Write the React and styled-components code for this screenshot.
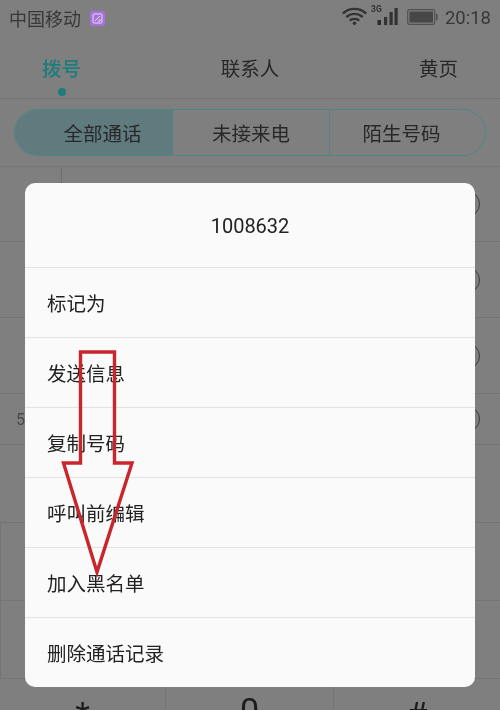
import React from "react";
import styled, { createGlobalStyle } from "styled-components";

const Global = createGlobalStyle`
  html, body { margin: 0; padding: 0; background: #7f7f7f; }
  body { font-family: "Noto Sans CJK SC", "Noto Sans", sans-serif; }
`;

const Page = styled.div`
  position: relative;
  width: 500px;
  height: 710px;
  overflow: hidden;
  background: #7f7f7f;
  color: #333;
  display: flex;
  flex-direction: column;
  filter: blur(0.3px);
`;

const StatusBar = styled.div`
  height: 36px;
  flex: none;
  display: flex;
  align-items: center;
  padding: 0 9px;
  font-size: 18px;
  color: #383838;
`;

const Carrier = styled.span`
  line-height: 34px;
`;

const SimBadge = styled.span`
  width: 15px;
  height: 15px;
  margin-left: 9px;
  border-radius: 2px;
  background: #a672d8;
  display: flex;
  align-items: center;
  justify-content: center;
`;

const StatusIcons = styled.div`
  margin-left: auto;
  display: flex;
  align-items: center;
`;

const Clock = styled.span`
  margin-left: 7px;
  font-family: Roboto, sans-serif;
  font-size: 18.5px;
`;

const Tabs = styled.div`
  height: 63px;
  flex: none;
  display: flex;
  justify-content: space-between;
  padding: 0 42px;
  border-bottom: 1px solid #727272;
  box-sizing: border-box;
`;

const Tab = styled.div`
  font-size: 19.5px;
  line-height: 24px;
  padding-top: 20px;
  font-weight: ${(p) => (p.$active ? 500 : 400)};
  color: ${(p) => (p.$active ? "#1c7d7b" : "#282828")};
  &::after {
    content: "";
    display: ${(p) => (p.$active ? "block" : "none")};
    width: 8px;
    height: 8px;
    margin: 8px auto 0;
    border-radius: 50%;
    background: #1c7d7b;
  }
`;

const Segments = styled.div`
  height: 47px;
  flex: none;
  margin: 10px 14px 10px;
  display: grid;
  grid-template-columns: 157px 157px 1fr;
  border: 1px solid #4f8587;
  border-radius: 24px;
  overflow: hidden;
  box-sizing: border-box;
`;

const Segment = styled.div`
  display: flex;
  align-items: center;
  justify-content: center;
  font-size: 19.5px;
  color: #282828;
  padding-left: ${(p) => p.$shiftLeft || 0}px;
  padding-right: ${(p) => p.$shiftRight || 0}px;
  background: ${(p) => (p.$active ? "#5f7b7d" : "transparent")};
  & + & { border-left: 1px solid #4f8587; }
`;

const List = styled.div`
  flex: 1;
  min-height: 0;
  display: grid;
  grid-template-rows: 75px 76px 76px 1fr;
  border-top: 1px solid #767676;
`;

const CallRow = styled.div`
  display: flex;
  align-items: center;
  justify-content: space-between;
  padding: 0 20px 0 0;
  border-bottom: 1px solid #757575;
`;

const RowLeft = styled.div`
  width: 62px;
  height: 100%;
  box-sizing: border-box;
  display: flex;
  align-items: center;
  padding: 0 0 0 16px;
  font-family: Roboto, sans-serif;
  font-size: 16px;
  color: #4a4a4a;
  border-right: ${(p) => (p.$rule ? "1px solid #6e6e6e" : "none")};
`;

const InfoCircle = styled.span`
  width: 26px;
  height: 26px;
  box-sizing: border-box;
  border: 1.5px solid #3a3a3a;
  border-radius: 50%;
`;

const Keypad = styled.div`
  height: 265px;
  flex: none;
  display: grid;
  grid-template-columns: 165px 168px 1fr;
  grid-auto-rows: 78px;
`;

const Key = styled.div`
  display: flex;
  justify-content: center;
  padding-top: ${(p) => (p.$symbol ? 15 : 11)}px;
  box-sizing: border-box;
  font-family: Roboto, sans-serif;
  font-size: 34px;
  line-height: 40px;
  color: #1c1c1c;
  border-bottom: 1px solid #757575;
  & + & { border-left: 1px solid #757575; }
  &:nth-child(3n + 1) { border-left: none; }
`;

const Dialog = styled.div`
  position: absolute;
  left: 25px;
  top: 183px;
  width: 450px;
  background: #fafafa;
  border-radius: 10px;
  overflow: hidden;
  color: #222;
`;

const DialogTitle = styled.div`
  height: 84px;
  box-sizing: border-box;
  padding-top: 2px;
  display: flex;
  align-items: center;
  justify-content: center;
  font-family: Roboto, sans-serif;
  font-size: 20px;
`;

const DialogItem = styled.div`
  height: 70px;
  box-sizing: border-box;
  border-top: 1px solid #e2e2e2;
  display: flex;
  align-items: center;
  padding: 0 22px;
  font-size: 19.5px;
`;

const ArrowMark = styled.svg`
  position: absolute;
  left: 0;
  top: 0;
  pointer-events: none;
`;

const menu = ["标记为", "发送信息", "复制号码", "呼叫前编辑", "加入黑名单", "删除通话记录"];
const keys = ["1", "2", "3", "4", "5", "6", "7", "8", "9", "*", "0", "#"];

function SignalIcons() {
  return (
    <svg width="58" height="26" viewBox="0 0 58 26" fill="none">
      <g stroke="#333" strokeWidth="2.4" strokeLinecap="round">
        <path d="M3.5 8 C9.5 2.5 19.5 2.5 25.5 8" />
        <path d="M7 11.5 C11 8 18 8 22 11.5" />
        <path d="M10.5 15 C12.5 13.5 16.5 13.5 18.5 15" />
      </g>
      <circle cx="14.5" cy="18.3" r="1.8" fill="#333" />
      <text x="31" y="7" fontSize="8.5" fontWeight="700" fontFamily="Roboto, sans-serif" fill="#333">3G</text>
      <rect x="37.5" y="15" width="3.5" height="5" fill="#2c2c2c" />
      <rect x="44" y="12" width="3.2" height="8" fill="#333" />
      <rect x="49.5" y="7" width="3.2" height="13" fill="#333" />
      <rect x="54.5" y="3" width="3.2" height="17" fill="#333" />
    </svg>
  );
}

function BatteryIcon() {
  return (
    <svg width="31" height="16" viewBox="0 0 31 16" fill="none" style={{ margin: "0 0 3px 9px" }}>
      <rect x="0.7" y="0.7" width="27" height="14.6" rx="1.5" stroke="#505050" strokeWidth="1.2" />
      <rect x="2.5" y="2.5" width="23.5" height="11" fill="#474747" />
      <rect x="29" y="5" width="1.6" height="6" fill="#505050" />
    </svg>
  );
}

export default function App() {
  return (
    <Page>
      <Global />
      <StatusBar>
        <Carrier>中国移动</Carrier>
        <SimBadge>
          <svg width="11" height="11" viewBox="0 0 11 11" fill="none" stroke="#e8d8f8" strokeWidth="1">
            <rect x="1" y="1" width="9" height="9" rx="1" />
            <path d="M3 8 L8 3 M6 8 H8 V6" />
          </svg>
        </SimBadge>
        <StatusIcons>
          <SignalIcons />
          <BatteryIcon />
          <Clock>20:18</Clock>
        </StatusIcons>
      </StatusBar>

      <Tabs>
        <Tab $active>拨号</Tab>
        <Tab>联系人</Tab>
        <Tab>黄页</Tab>
      </Tabs>

      <Segments>
        <Segment $active $shiftLeft={18}>全部通话</Segment>
        <Segment>未接来电</Segment>
        <Segment $shiftRight={12}>陌生号码</Segment>
      </Segments>

      <List>
        <CallRow><RowLeft $rule /><InfoCircle /></CallRow>
        <CallRow><RowLeft /><InfoCircle /></CallRow>
        <CallRow><RowLeft /><InfoCircle /></CallRow>
        <CallRow><RowLeft>5</RowLeft><InfoCircle /></CallRow>
      </List>

      <Keypad>
        {keys.map((k) => (
          <Key key={k} $symbol={k === "*" || k === "#"}>{k}</Key>
        ))}
      </Keypad>

      <Dialog>
        <DialogTitle>1008632</DialogTitle>
        {menu.map((m) => (
          <DialogItem key={m}>{m}</DialogItem>
        ))}
      </Dialog>

      <ArrowMark width="500" height="710" viewBox="0 0 500 710" fill="none">
        <path
          d="M80.5 352 H114.5 V463 H132 L97 572 L63.5 463 H80.5 Z"
          stroke="#c9252d"
          strokeWidth="3.4"
          strokeLinejoin="miter"
        />
      </ArrowMark>
    </Page>
  );
}
